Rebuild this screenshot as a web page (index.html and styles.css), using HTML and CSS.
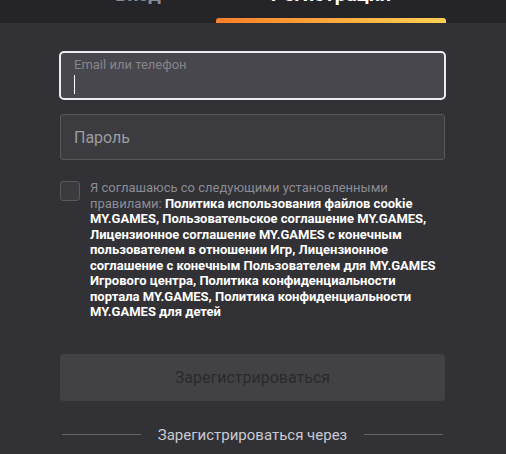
FILE: index.html
```html
<!DOCTYPE html>
<html lang="ru">
<head>
    <meta charset="UTF-8">
    <meta name="viewport" content="width=device-width, initial-scale=1.0">
    <title>Регистрация</title>
    <link rel="stylesheet" href="styles.css">
</head>
<body>
    <div class="tabs">
        <div class="tab">Вход</div>
        <div class="tab tab-active">Регистрация</div>
    </div>

    <div class="form">
        <!-- Поля ввода -->
        <div class="field field-focus">
            <span class="field-label">Email или телефон</span>
            <span class="caret"></span>
        </div>
        <div class="field">
            <span class="field-placeholder">Пароль</span>
        </div>

        <!-- Соглашение -->
        <div class="agree">
            <span class="checkbox"></span>
            <p class="agree-text">Я соглашаюсь со следующими установленными правилами: <b>Политика использования файлов cookie MY.GAMES, Пользовательское соглашение MY.GAMES, Лицензионное соглашение MY.GAMES с конечным пользователем в отношении Игр, Лицензионное соглашение с конечным Пользователем для MY.GAMES Игрового центра, Политика конфиденциальности портала MY.GAMES, Политика конфиденциальности MY.GAMES для детей</b></p>
        </div>

        <button class="submit" disabled>Зарегистрироваться</button>

        <div class="divider">
            <span class="line"></span>
            <span class="divider-text">Зарегистрироваться через</span>
            <span class="line"></span>
        </div>
    </div>
</body>
</html>
```

FILE: styles.css
```css
body {
    margin: 0;
    background: #313136;
    font-family: Roboto, "Liberation Sans", Arial, sans-serif;
    color: #fff;
    height: 454px;
    overflow: hidden;
}

.tabs {
    display: flex;
    height: 23px;
    padding-left: 60px;
    background: #242429;
}

.tab {
    width: 156px;
    margin-top: -16px;
    text-align: center;
    font-size: 20px;
    font-weight: 700;
    line-height: 20px;
    color: #8a8a90;
}

.tab-active {
    width: 230px;
    color: #fff;
    position: relative;
}

/* оранжевая полоса под активной вкладкой */
.tab-active::after {
    content: "";
    position: absolute;
    left: 0;
    right: 0;
    bottom: 0;
    height: 5px;
    border-radius: 3px 3px 0 0;
    background: linear-gradient(to right, #fd7f27, #ffd152);
}

.form {
    padding: 28px 61px 0 60px;
    display: flex;
    flex-direction: column;
}

.field {
    height: 44px;
    border: 1px solid #57575c;
    border-radius: 3px;
    background: #3b3b40;
    display: flex;
    flex-direction: column;
    justify-content: center;
    padding: 0 13px;
    margin-bottom: 14px;
}

.field-focus {
    height: 41px;
    margin: 0 -1px 14px;
    border: 2px solid #ececf0;
    border-radius: 5px;
    background: #48474d;
    justify-content: flex-start;
    padding-top: 4px;
}

.field-label {
    font-size: 13px;
    line-height: 15px;
    color: #85858b;
}

.caret {
    display: block;
    width: 1px;
    height: 19px;
    margin-top: 3px;
    background: #fff;
}

.field-placeholder {
    font-size: 16px;
    color: #9b9ba0;
}

.agree {
    display: flex;
    gap: 10px;
    margin-top: 6px;
}

.checkbox {
    flex: none;
    width: 18px;
    height: 18px;
    border: 1px solid #58585d;
    border-radius: 3px;
    background: #3a3a3f;
    margin-top: 1px;
}

.agree-text {
    margin: 0;
    font-size: 13px;
    line-height: 15.5px;
    color: #8c8c92;
}

.agree-text b {
    font-weight: 700;
    color: #fff;
}

.submit {
    margin-top: 34px;
    height: 47px;
    border: none;
    border-radius: 4px;
    background: #424245;
    color: #2a2a2d;
    font-family: inherit;
    font-size: 16px;
}

.divider {
    display: flex;
    align-items: center;
    gap: 17px;
    margin-top: 25px;
    padding: 0 2px;
}

.line {
    flex: 1;
    height: 1px;
    background: #636368;
}

.divider-text {
    font-size: 15px;
    color: #c9c9d2;
}
```
